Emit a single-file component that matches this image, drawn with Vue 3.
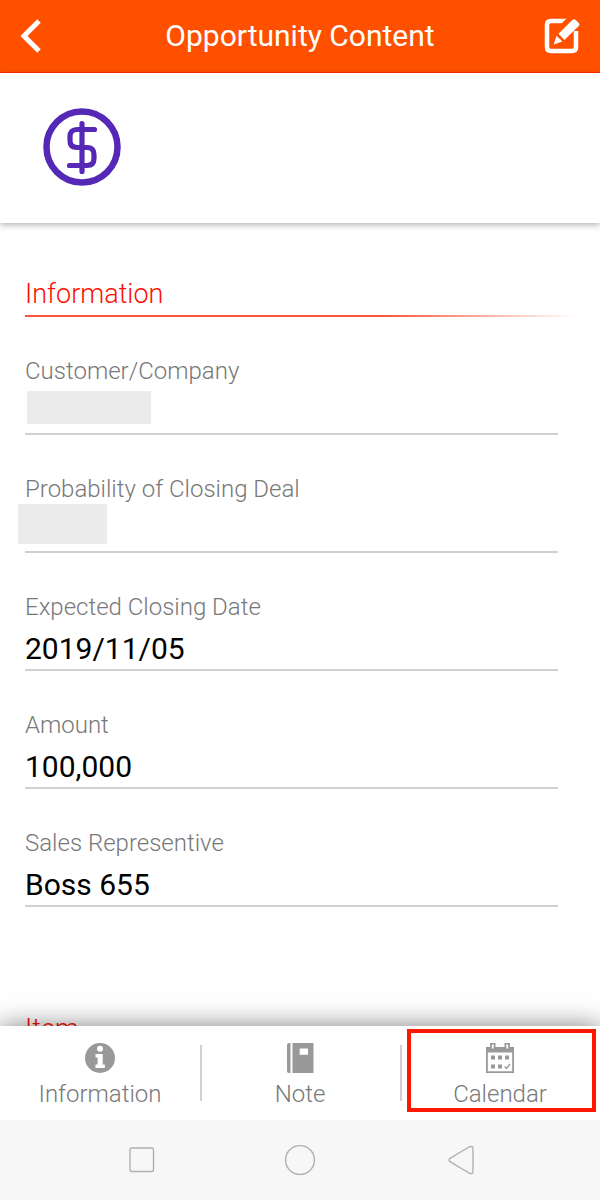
<script setup>
import { ref } from 'vue'

const fields = ref([
  { id: 'customer', label: 'Customer/Company', value: '', mask: 'mask-wide' },
  { id: 'probability', label: 'Probability of Closing Deal', value: '', mask: 'mask-short' },
  { id: 'closing-date', label: 'Expected Closing Date', value: '2019/11/05' },
  { id: 'amount', label: 'Amount', value: '100,000' },
  { id: 'sales', label: 'Sales Representive', value: 'Boss 655' },
])
</script>

<template>
  <div class="screen">
    <header class="topbar">
      <button class="icon-button" type="button" aria-label="Back">
        <svg width="22" height="36" viewBox="0 0 22 36" fill="none" stroke="#fff" stroke-width="5">
          <path d="M19 3 4 18 19 33" />
        </svg>
      </button>
      <h1>Opportunity Content</h1>
      <button class="icon-button" type="button" aria-label="Edit">
        <svg width="36" height="36" viewBox="0 0 36 36">
          <path d="M24 3H7Q3 3 3 7V29Q3 33 7 33H28Q32 33 32 29V13" fill="none" stroke="#fff" stroke-width="4.5" />
          <path d="M18 25 35 8V0H23L8 15V28Z" fill="#ff5000" />
          <path d="M14.500 15.800 28.500 1.800Q30 .5 31.500 1.800L34.800 5.100Q36 6.500 34.800 8L20.400 21.900ZM12.500 17.800 18.400 23.500 9.700 26.600Z" fill="#fff" />
        </svg>
      </button>
    </header>

    <section class="summary">
      <svg width="78" height="78" viewBox="0 0 78 78" fill="none" stroke="#5529b5">
        <circle cx="39" cy="39" r="35.500" stroke-width="6.500" />
        <path d="M39 15.500V63.500M51.500 21.500H34Q27 21.500 27 28.500V32.500Q27 39.500 34 39.500H44Q51 39.500 51 46.500V50.500Q51 57.500 44 57.500H26.500" stroke-width="5.200" stroke-linecap="round" />
      </svg>
    </section>

    <main class="content">
      <h2>Information</h2>
      <form class="fields">
        <div v-for="field in fields" :key="field.id" class="field">
          <label :for="field.id">{{ field.label }}</label>
          <div class="value">
            <input :id="field.id" type="text" :value="field.value" readonly />
            <span v-if="field.mask" class="mask" :class="field.mask"></span>
          </div>
        </div>
      </form>
      <h2 class="next">Item</h2>
    </main>

    <nav class="tabs">
      <button class="tab" type="button">
        <svg width="32" height="32" viewBox="0 0 32 32">
          <circle cx="16" cy="16" r="15" fill="#999" />
          <circle cx="16" cy="6.800" r="3" fill="#fff" />
          <path d="M11.500 12H18.700V22.500H20.800V26H11.500V22.500H13.600V15.500H11.500Z" fill="#fff" />
        </svg>
        <span>Information</span>
      </button>
      <button class="tab" type="button">
        <svg width="32" height="32" viewBox="0 0 32 32" fill="#999">
          <path d="M5 1H6.500V31H5Q3 31 3 29V3Q3 1 5 1Z" />
          <path fill-rule="evenodd" d="M8.500 1H29.500V31H8.500ZM15.700 6.500V12.700H24V6.500Z" />
        </svg>
        <span>Note</span>
      </button>
      <button class="tab marked" type="button">
        <svg width="32" height="32" viewBox="0 0 32 32">
          <path d="M2 5H30V31H2ZM3.800 10.500V29.200H28.200V10.500Z" fill="#999" fill-rule="evenodd" />
          <path d="M6 1H11.500V7H6ZM20.500 1H26V7H20.500Z" fill="#999" />
          <path d="M7.800 2.500H9.700V6.500H7.800ZM22.300 2.500H24.200V6.500H22.300Z" fill="#fff" />
          <path d="M7 13.500H11V17.500H7ZM14 13.500H18V17.500H14ZM21 13.500H25V17.500H21ZM7 22.500H11V26.500H7ZM14 22.500H18V26.500H14Z" fill="#999" />
          <path d="M20.500 24.500 22.500 26.500 26 22" fill="none" stroke="#999" stroke-width="1.300" />
        </svg>
        <span>Calendar</span>
      </button>
    </nav>

    <footer class="system">
      <button type="button" aria-label="Recent apps">
        <svg width="32" height="32" viewBox="0 0 32 32"><rect x="4" y="4" width="23.500" height="23.500" rx="2" /></svg>
      </button>
      <button type="button" aria-label="Home">
        <svg width="32" height="32" viewBox="0 0 32 32"><circle cx="16" cy="16" r="14.400" /></svg>
      </button>
      <button type="button" aria-label="Go back">
        <svg width="32" height="32" viewBox="0 0 32 32"><path d="M8 14.300 27 3Q31 1 31 5V27Q31 31 27 29L8 17.700Q6 16 8 14.300Z" /></svg>
      </button>
    </footer>
  </div>
</template>

<style>
body {
  margin: 0;
}
</style>

<style scoped>
.screen {
  display: flex;
  flex-direction: column;
  height: 100vh;
  overflow: hidden;
  background: #fff;
  font-family: Roboto, "Liberation Sans", sans-serif;
}

button {
  padding: 0;
  border: 0;
  background: none;
  font: inherit;
  color: inherit;
}

svg {
  display: block;
}

.topbar {
  display: flex;
  align-items: center;
  justify-content: space-between;
  flex: none;
  height: 72px;
  padding: 0 20px;
  border-bottom: 1px solid #ff2a00;
  background: #ff5000;
  color: #fff;
}

.icon-button {
  display: flex;
  width: 36px;
}

h1 {
  margin: 0;
  font-size: 30px;
  line-height: 40px;
  font-weight: 400;
}

.summary {
  position: relative;
  flex: none;
  padding: 35px 43px 37px;
  background: #fff;
  box-shadow: 0 2px 6px rgba(0, 0, 0, 0.3);
}

.content {
  flex: 1;
  min-height: 0;
  padding: 51px 25px 0;
  overflow: hidden;
}

h2 {
  margin: 0;
  border-bottom: 2px solid;
  border-image: linear-gradient(to right, #f8553c 65%, transparent) 1;
  color: #ff1000;
  font-size: 27px;
  line-height: 41px;
  font-weight: 300;
}

.next {
  margin-top: 102px;
}

.fields {
  padding-right: 17px;
}

.field {
  padding-top: 38px;
}

.field label {
  display: block;
  color: #787878;
  font-size: 24px;
  line-height: 32px;
  font-weight: 300;
}

.value {
  position: relative;
  padding-top: 4px;
  border-bottom: 2px solid #d0d0d0;
}

.value input {
  display: block;
  box-sizing: border-box;
  width: 100%;
  height: 42px;
  padding: 0;
  border: 0;
  outline: 0;
  background: none;
  color: #000;
  font: inherit;
  font-size: 30px;
}

.mask {
  position: absolute;
  background: #ebebeb;
}

.mask-wide {
  left: 2px;
  bottom: 9px;
  width: 124px;
  height: 33px;
}

.mask-short {
  left: -7px;
  bottom: 7px;
  width: 89px;
  height: 40px;
}

.tabs {
  position: relative;
  display: grid;
  grid-template-columns: repeat(3, 1fr);
  flex: none;
  padding: 14px 0 10px;
  background: #fff;
  box-shadow: 0 0 24px rgba(0, 0, 0, 0.5);
}

.tab {
  position: relative;
  display: flex;
  flex-direction: column;
  align-items: center;
  gap: 5px;
  height: 70px;
  padding-top: 2px;
  color: #787878;
  font-size: 24px;
  line-height: 30px;
  font-weight: 300;
}

.tab + .tab::before {
  content: "";
  position: absolute;
  top: 5px;
  left: 0;
  width: 2px;
  height: 56px;
  background: #d0d0d0;
}

.marked::after {
  content: "";
  position: absolute;
  inset: -11px 4px -2px 7px;
  border: 4px solid #ff1800;
}

.system {
  position: relative;
  display: flex;
  align-items: center;
  justify-content: center;
  gap: 126px;
  flex: none;
  height: 80px;
  background: #f7f7f7;
}

.system svg {
  fill: none;
  stroke: #b0b0b0;
  stroke-width: 1.4;
}
</style>
